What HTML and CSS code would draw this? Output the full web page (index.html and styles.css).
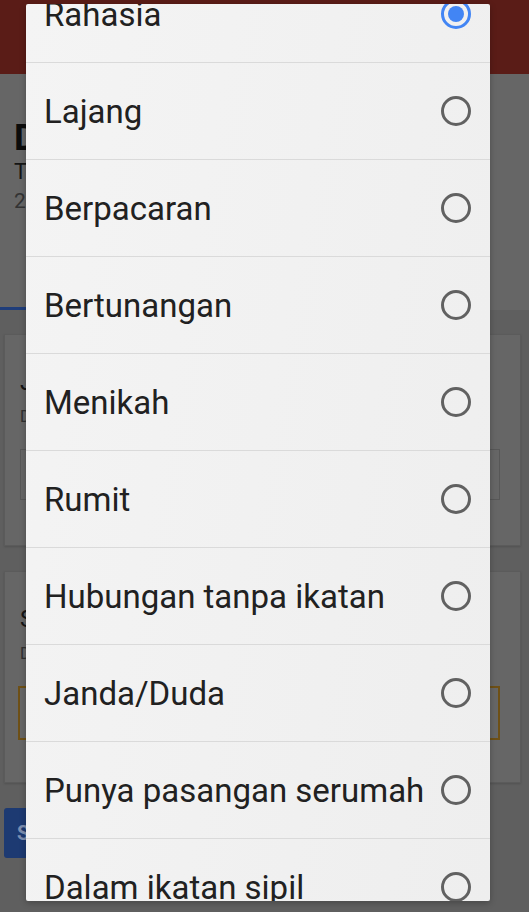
FILE: index.html
```html
<!DOCTYPE html>
<html>
<head>
	<meta name="viewport" content="width=device-width, initial-scale=1">
	<title>Status hubungan</title>
	<link rel="stylesheet" href="styles.css">
</head>
<body>
<div class="page">
	<div class="topbar"></div>
	<div class="profile">
		<div class="name">Data</div>
		<div class="sub">Tentang</div>
		<div class="meta">2</div>
	</div>
	<div class="tabbar"><div class="tabline"></div></div>
	<div class="content">
		<div class="card">
			<div class="card-title">Jenis</div>
			<div class="card-desc">Data</div>
			<div class="field"></div>
		</div>
		<div class="card">
			<div class="card-title">Status</div>
			<div class="card-desc">Data</div>
			<div class="field gold"></div>
		</div>
		<div class="btn">Simpan</div>
	</div>
</div>

<div class="dialog">
	<div class="list">
		<div class="row"><span>Rahasia</span><span class="radio on"></span></div>
		<div class="row"><span>Lajang</span><span class="radio"></span></div>
		<div class="row"><span>Berpacaran</span><span class="radio"></span></div>
		<div class="row"><span>Bertunangan</span><span class="radio"></span></div>
		<div class="row"><span>Menikah</span><span class="radio"></span></div>
		<div class="row"><span>Rumit</span><span class="radio"></span></div>
		<div class="row"><span>Hubungan tanpa ikatan</span><span class="radio"></span></div>
		<div class="row"><span>Janda/Duda</span><span class="radio"></span></div>
		<div class="row"><span>Punya pasangan serumah</span><span class="radio"></span></div>
		<div class="row"><span>Dalam ikatan sipil</span><span class="radio"></span></div>
	</div>
</div>
</body>
</html>
```

FILE: styles.css
```css
body{
	margin: 0;
	width: 529px;
	height: 912px;
	overflow: hidden;
	font-family: Roboto, 'Noto Sans', sans-serif;
	background: #5f5f5f;
}
.page{
	display: flex;
	flex-direction: column;
}
.topbar{
	height: 74px;
	background: #5a1c17;
}
.profile{
	height: 233px;
	background: #666;
	padding: 44px 0 0 14px;
	box-sizing: border-box;
}
.name{
	font-size: 36px;
	font-weight: bold;
	color: #0c0c0c;
	line-height: 40px;
}
.sub{
	font-size: 22px;
	color: #151515;
	line-height: 26px;
	margin-top: 1px;
}
.meta{
	font-size: 21px;
	color: #333;
	line-height: 32px;
}
.tabbar{
	height: 3px;
	background: #666;
}
.tabline{
	width: 250px;
	height: 3px;
	background: #1f3d7a;
}
.content{
	display: flex;
	flex-direction: column;
	gap: 25px;
	padding: 24px 8px 0 4px;
}
.card{
	height: 212px;
	background: #666;
	border: 1px solid #5b5b5b;
	box-shadow: 0 1px 2px rgba(0,0,0,0.15);
	padding: 32px 20px 0 15px;
	box-sizing: border-box;
}
.card-title{
	font-size: 24px;
	color: #151515;
	line-height: 30px;
}
.card-desc{
	font-size: 16px;
	color: #303030;
	line-height: 20px;
	margin-top: 10px;
}
.field{
	height: 51px;
	border: 1px solid #575757;
	margin-top: 22px;
	box-sizing: border-box;
}
.field.gold{
	border: 2px solid #6e5016;
	margin-left: -2px;
	height: 54px;
}
.btn{
	width: 140px;
	height: 50px;
	background: #1d3a72;
	color: #7d8fb0;
	font-size: 20px;
	font-weight: bold;
	line-height: 50px;
	padding-left: 13px;
	border-radius: 3px;
	box-sizing: border-box;
}

.dialog{
	position: absolute;
	left: 26px;
	top: 4px;
	width: 464px;
	height: 897px;
	overflow: hidden;
	border-radius: 2px;
	background: linear-gradient(100deg, #f4f4f4, #eeeeee);
	box-shadow: 0 2px 6px rgba(0,0,0,0.25);
}
.list{
	margin-top: -38px;
}
.row{
	height: 96px;
	border-bottom: 1px solid #dadada;
	display: flex;
	align-items: center;
	justify-content: space-between;
	padding: 0 19px 0 18px;
	font-size: 33px;
	color: #212121;
}
.radio{
	width: 24px;
	height: 24px;
	border: 3px solid #616161;
	border-radius: 50%;
	position: relative;
	flex: none;
}
.radio.on{
	border-color: #4285f4;
}
.radio.on::after{
	content: "";
	position: absolute;
	left: 4px;
	top: 4px;
	width: 16px;
	height: 16px;
	border-radius: 50%;
	background: #4285f4;
}
```
